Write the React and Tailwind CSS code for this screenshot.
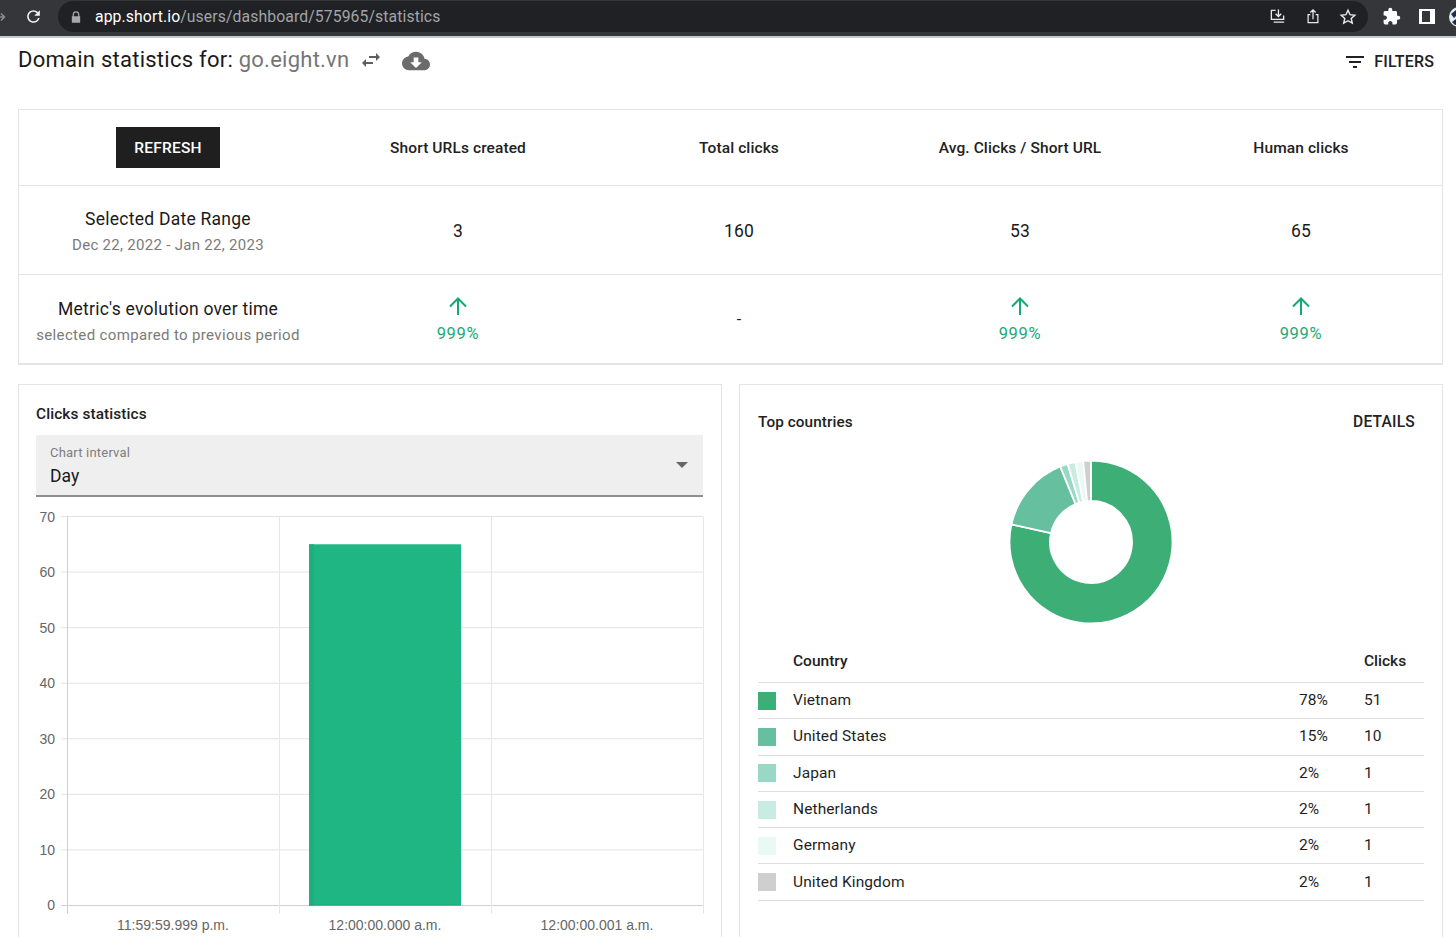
const FONT = "font-['Roboto',sans-serif]";

function Mi({ d, className }) {
  return (
    <svg viewBox="0 0 24 24" className={className} fill="currentColor">
      <path d={d} />
    </svg>
  );
}

function BrowserBar() {
  return (
    <div className="h-[38px] shrink-0 bg-[#35363a] border-b-2 border-b-[#c9c9c9] flex items-start overflow-hidden">
      <svg viewBox="0 0 6 12" className="w-[6px] h-[12px] mt-[11px] text-[#8a8b8d] shrink-0" fill="none" stroke="currentColor" strokeWidth="1.6">
        <path d="M-4 6h8M1 2.5 4.5 6 1 9.5" />
      </svg>
      <svg viewBox="0 0 24 24" className="w-[19px] h-[19px] ml-[18px] mt-[7px] text-[#f1f3f4] shrink-0" fill="currentColor">
        <path d="M17.65 6.35A7.958 7.958 0 0 0 12 4c-4.42 0-7.99 3.58-7.99 8s3.57 8 7.99 8c3.73 0 6.84-2.55 7.73-6h-2.08A5.99 5.99 0 0 1 12 18c-3.31 0-6-2.69-6-6s2.69-6 6-6c1.66 0 3.14.69 4.22 1.78L13 11h7V4l-2.35 2.35z" />
      </svg>
      <div className="ml-[15px] mt-px w-[1310px] h-[31px] rounded-full bg-[#202124] flex items-center shrink-0">
        <svg viewBox="0 0 12 14" className="w-[10px] h-[12px] ml-[13px] text-[#a6a8ab]" fill="currentColor">
          <path d="M2 6V4a4 4 0 0 1 8 0v2h1v8H1V6h1zm1.5 0h5V4a2.5 2.5 0 0 0-5 0v2z" />
        </svg>
        <span className={`${FONT} ml-[14px] text-[15.75px] leading-none tracking-[0.1px] text-white`}>
          app.short.io<span className="text-[#a2a4a7]">/users/dashboard/575965/statistics</span>
        </span>
        <div className="ml-auto flex items-center mr-[11px] text-[#e8eaed]">
          <svg viewBox="0 0 18 18" className="w-[17px] h-[17px]" fill="none" stroke="currentColor" strokeWidth="1.4">
            <path d="M7 2.5H2.5v9.5h13V8M10 1.5v7M7 6l3 3 3-3M5 15h11" />
          </svg>
          <svg viewBox="0 0 18 18" className="w-[16px] h-[17px] ml-[19px]" fill="none" stroke="currentColor" strokeWidth="1.4">
            <path d="M6 7H3.5v9h11V7H12M9 12V2M6 4.5 9 1.5l3 3" />
          </svg>
          <svg viewBox="0 0 24 24" className="w-[18px] h-[18px] ml-[18px]" fill="none" stroke="currentColor" strokeWidth="1.9">
            <path d="m12 3 2.7 5.9 6.4.7-4.8 4.3 1.4 6.3L12 17l-5.7 3.2 1.4-6.3-4.8-4.3 6.4-.7z" />
          </svg>
        </div>
      </div>
      <Mi
        className="w-[19px] h-[19px] ml-[14px] mt-[7px] text-white shrink-0"
        d="M20.5 11H19V7c0-1.1-.9-2-2-2h-4V3.5C13 2.12 11.88 1 10.5 1S8 2.12 8 3.5V5H4c-1.1 0-1.99.9-1.99 2v3.8H3.5c1.49 0 2.7 1.21 2.7 2.7s-1.21 2.7-2.7 2.7H2V20c0 1.1.9 2 2 2h3.8v-1.5c0-1.49 1.21-2.7 2.7-2.7 1.49 0 2.7 1.21 2.7 2.7V22H17c1.1 0 2-.9 2-2v-4h1.5c1.38 0 2.5-1.12 2.5-2.5S21.88 11 20.5 11z"
      />
      <div className="ml-[18px] mt-[9px] w-[16px] h-[15px] bg-white shrink-0">
        <div className="ml-[3px] mt-[2px] w-[8px] h-[11px] bg-[#35363a]" />
      </div>
      <svg viewBox="0 0 20 20" className="ml-[14px] mt-[7px] w-[20px] h-[20px] shrink-0">
        <circle cx="10" cy="10" r="10" fill="#e4ebf5" />
        <path d="M2 7 7 3l1 5-3 3zM3 15l4-3 2 5-3 1z" fill="#1c2b4a" />
      </svg>
    </div>
  );
}

function Header() {
  return (
    <div className="flex items-start h-[71px] shrink-0 pl-[18px] pr-[22px]">
      <h1 className="mt-[7px] text-[22px] leading-[29px] font-normal text-[#1a1a1a] tracking-[0.25px]">
        Domain statistics for: <span className="text-[#757575]">go.eight.vn</span>
      </h1>
      <Mi
        className="ml-[10px] mt-[10px] w-[24px] h-[24px] text-[#5f5f5f]"
        d="M6.99 11L3 15l3.99 4v-3H14v-2H6.99v-3zM21 9l-3.99-4v3H10v2h7.01v3L21 9z"
      />
      <Mi
        className="ml-[19px] mt-[9px] w-[28px] h-[28px] text-[#6b6b6b]"
        d="M19.35 10.04C18.67 6.59 15.64 4 12 4 9.11 4 6.6 5.64 5.35 8.04 2.34 8.36 0 10.91 0 14c0 3.31 2.69 6 6 6h13c2.76 0 5-2.24 5-5 0-2.64-2.05-4.78-4.65-4.96zM17 13l-5 5-5-5h3V9h4v4h3z"
      />
      <div className="ml-auto mt-[12px] flex items-center gap-[7px] text-[#212121]">
        <Mi className="w-[24px] h-[24px]" d="M10 18h4v-2h-4v2zM3 6v2h18V6H3zm3 7h12v-2H6v2z" />
        <span className="text-[16px] leading-[24px] font-medium tracking-[0.15px]">FILTERS</span>
      </div>
    </div>
  );
}

function Up() {
  return (
    <div className="pt-[3px] flex flex-col items-center text-[#1fa876] text-[16.5px] leading-[22px] tracking-[0.7px]">
      <svg viewBox="0 0 18 18" className="w-[18px] h-[18px] -ml-px text-[#14a874]" fill="none" stroke="currentColor" strokeWidth="2">
        <path d="M9 18V1.5M1 9.5l8-8 8 8" />
      </svg>
      <span className="mt-[8px]">999%</span>
    </div>
  );
}

function StatCell({ children, className = "" }) {
  return <div className={`flex items-center justify-center text-center ${className}`}>{children}</div>;
}

function StatsTable() {
  const cols = "grid grid-cols-[299px_281px_281px_281px_281px]";
  const head = "pt-[2px] pr-px";
  return (
    <div className="ml-[18px] w-[1425px] shrink-0 border border-b-2 border-[#e4e4e4]">
      <div className={`${cols} h-[76px] border-b border-[#e4e4e4] text-[15.5px] font-medium text-[#222] tracking-[0.1px]`}>
        <StatCell className="pr-px">
          <button className="w-[104px] h-[41px] pt-[2px] bg-[#1f1f1f] text-white text-[15.5px] font-medium tracking-[0.2px]">REFRESH</button>
        </StatCell>
        <StatCell className={head}>Short URLs created</StatCell>
        <StatCell className={head}>Total clicks</StatCell>
        <StatCell className={head}>Avg. Clicks / Short URL</StatCell>
        <StatCell className={head}>Human clicks</StatCell>
      </div>
      <div className={`${cols} h-[89px] border-b border-[#e4e4e4] text-[17.5px] text-[#1a1a1a] tracking-[0.2px]`}>
        <div className="pt-[4px] pr-px flex flex-col items-center justify-center">
          <div className="text-[17.5px] leading-[26px] tracking-[0.25px]">Selected Date Range</div>
          <div className="text-[15px] leading-[26px] text-[#7a7a7a] tracking-[0.3px]">Dec 22, 2022 - Jan 22, 2023</div>
        </div>
        <StatCell className={head}>3</StatCell>
        <StatCell className={head}>160</StatCell>
        <StatCell className={head}>53</StatCell>
        <StatCell className={head}>65</StatCell>
      </div>
      <div className={`${cols} h-[88px] text-[16px] text-[#1a1a1a]`}>
        <div className="pt-[6px] pr-px flex flex-col items-center justify-center">
          <div className="text-[17.5px] leading-[26px] tracking-[0.25px]">Metric's evolution over time</div>
          <div className="text-[15px] leading-[26px] text-[#7a7a7a] tracking-[0.35px]">selected compared to previous period</div>
        </div>
        <StatCell className="pr-px"><Up /></StatCell>
        <StatCell className={head}>-</StatCell>
        <StatCell className="pr-px"><Up /></StatCell>
        <StatCell className="pr-px"><Up /></StatCell>
      </div>
    </div>
  );
}

function BarChart() {
  const yTicks = [70, 60, 50, 40, 30, 20, 10, 0];
  const top = 10.5;
  const step = 55.57;
  const xs = [31, 243, 455, 667];
  const labels = ["11:59:59.999 p.m.", "12:00:00.000 a.m.", "12:00:00.001 a.m."];
  return (
    <svg width="680" height="440" className="block mt-[9px]" style={{ fontFamily: "'Liberation Sans', sans-serif" }}>
      {yTicks.map((v, i) => {
        const y = top + i * step;
        return (
          <g key={v}>
            <line x1="25" x2="667" y1={y} y2={y} stroke={v === 0 ? "#cfcfcf" : "#e3e3e3"} />
            <text x="19" y={y + 5} textAnchor="end" fontSize="14" fill="#666">{v}</text>
          </g>
        );
      })}
      {xs.map((x, i) => (
        <line key={x} x1={x + 0.5} x2={x + 0.5} y1={top} y2={top + 7 * step + 8} stroke={i === 0 ? "#cfcfcf" : "#e6e6e6"} />
      ))}
      <rect x="273" y={top + 0.5 * step} width="152" height={6.5 * step} fill="#20b683" />
      <rect x="273" y={top + 0.5 * step} width="5" height={6.5 * step} fill="#1cb07d" />
      <rect x="273" y={top + 7 * step - 1} width="152" height="1" fill="#1cae7a" />
      {labels.map((t, i) => (
        <text key={t} x={137 + i * 212} y={top + 7 * step + 25} textAnchor="middle" fontSize="14" fill="#666">{t}</text>
      ))}
    </svg>
  );
}

function ClicksCard() {
  return (
    <div className="w-[704px] h-[700px] shrink-0 border border-[#e4e4e4] pl-[17px]">
      <div className="mt-[18px] text-[15.4px] leading-[22px] font-medium text-[#222] tracking-[0.1px]">Clicks statistics</div>
      <div className="mt-[10px] h-[62px] w-[667px] bg-[#efefef] border-b-2 border-[#8e8e8e] relative pl-[14px]">
        <div className="pt-[9px] text-[13px] leading-[17px] text-[#7d7d7d] tracking-[0.2px]">Chart interval</div>
        <div className="mt-[3px] text-[17.5px] leading-[24px] text-[#1a1a1a]">Day</div>
        <div className="absolute right-[15px] top-[27px] w-0 h-0 border-l-[6px] border-r-[6px] border-t-[6px] border-l-transparent border-r-transparent border-t-[#666]" />
      </div>
      <BarChart />
    </div>
  );
}

const countries = [
  { name: "Vietnam", pct: "78%", clicks: 51, color: "#3dae75", v: 51 },
  { name: "United States", pct: "15%", clicks: 10, color: "#66c0a0", v: 10 },
  { name: "Japan", pct: "2%", clicks: 1, color: "#98d8c4", v: 1 },
  { name: "Netherlands", pct: "2%", clicks: 1, color: "#c8ebe2", v: 1 },
  { name: "Germany", pct: "2%", clicks: 1, color: "#e9faf4", v: 1 },
  { name: "United Kingdom", pct: "2%", clicks: 1, color: "#cfcfcf", v: 1 },
];

function Donut() {
  const total = 65;
  const R = 81.5;
  const r = 41;
  const c = 82;
  let a = 0;
  const pt = (rad, deg) => {
    const t = ((deg - 90) * Math.PI) / 180;
    return `${(c + rad * Math.cos(t)).toFixed(2)} ${(c + rad * Math.sin(t)).toFixed(2)}`;
  };
  return (
    <svg width="164" height="164" viewBox="0 0 164 164">
      {countries.map((s) => {
        const start = a;
        const end = a + (s.v / total) * 360;
        a = end;
        const large = end - start > 180 ? 1 : 0;
        return (
          <path
            key={s.name}
            d={`M${pt(R, start)}A${R} ${R} 0 ${large} 1 ${pt(R, end)}L${pt(r, end)}A${r} ${r} 0 ${large} 0 ${pt(r, start)}Z`}
            fill={s.color}
            stroke="#fff"
            strokeWidth="1.8"
          />
        );
      })}
    </svg>
  );
}

function CountriesCard() {
  return (
    <div className="w-[704px] h-[700px] shrink-0 border border-[#e4e4e4] pl-[18px]">
      <div className="mt-[26px] flex items-center justify-between pr-[27px] text-[#222] font-medium">
        <span className="text-[15.3px] leading-[22px] tracking-[0.1px]">Top countries</span>
        <span className="text-[15.6px] leading-[22px] tracking-[0.2px]">DETAILS</span>
      </div>
      <div className="mt-[27px] w-[665px] flex justify-center">
        <Donut />
      </div>
      <div className="mt-[16px] w-[666px]">
        <div className="h-[43px] pt-[2px] grid grid-cols-[35px_1fr_65px_60px] items-center border-b border-[#dedede] text-[15.5px] font-medium text-[#222]">
          <span />
          <span>Country</span>
          <span />
          <span>Clicks</span>
        </div>
        {countries.map((c) => (
          <div key={c.name} className="h-[36.3px] grid grid-cols-[35px_1fr_65px_60px] items-center border-b border-[#dedede] text-[15.5px] text-[#1f1f1f] tracking-[0.1px]">
            <svg width="18" height="18" className="block"><rect width="18" height="18" fill={c.color} /></svg>
            <span>{c.name}</span>
            <span>{c.pct}</span>
            <span>{c.clicks}</span>
          </div>
        ))}
      </div>
    </div>
  );
}

export default function App() {
  return (
    <div className={`${FONT} w-[1456px] h-[937px] overflow-hidden bg-white flex flex-col`}>
      <BrowserBar />
      <Header />
      <StatsTable />
      <div className="mt-[19px] ml-[18px] flex gap-[17px]">
        <ClicksCard />
        <CountriesCard />
      </div>
    </div>
  );
}
